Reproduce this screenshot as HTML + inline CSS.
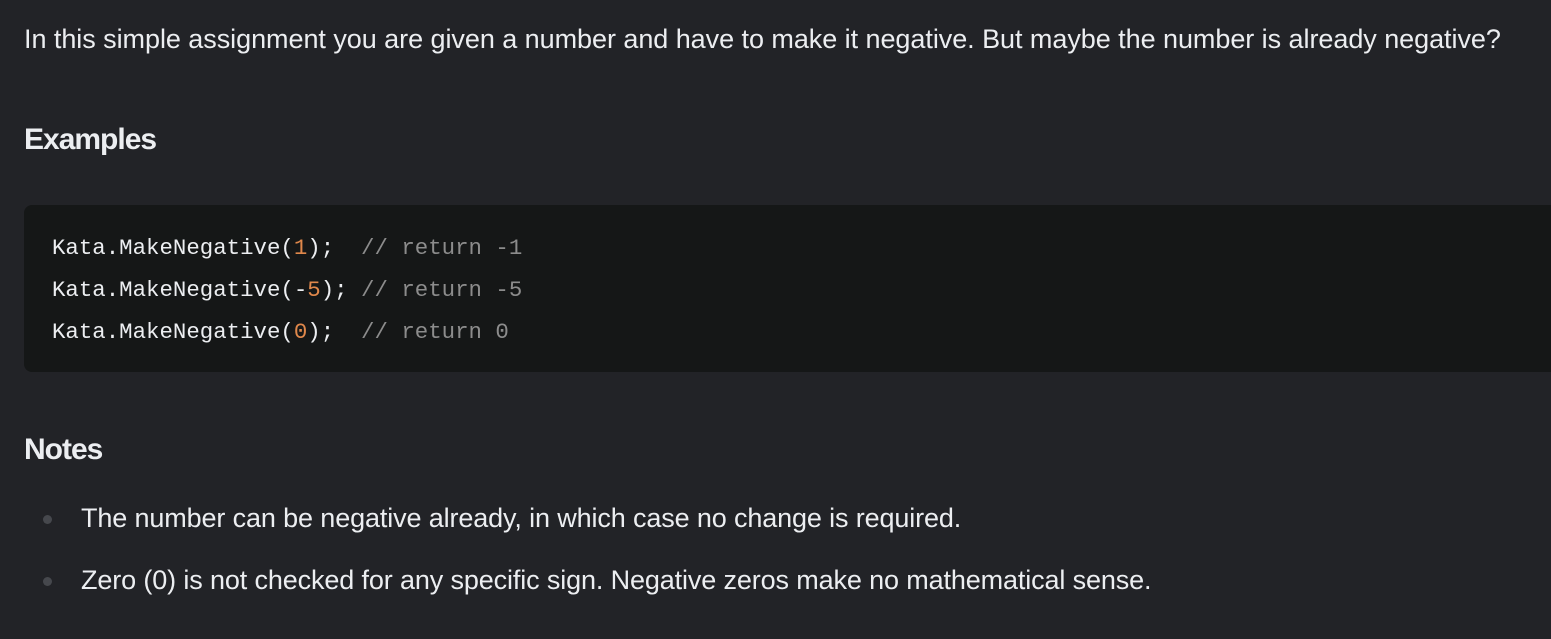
<!DOCTYPE html>
<html><head><meta charset="utf-8"><style>
html,body{margin:0;padding:0;background:#222327;width:1551px;height:639px;overflow:hidden;}
body{font-family:"Liberation Sans",sans-serif;color:#eceef1;position:relative;}
.t{position:absolute;white-space:nowrap;}
p.t{margin:0;font-size:27px;letter-spacing:-0.05px;}
p.s{letter-spacing:-0.13px;}
h.t{font-weight:bold;font-size:30px;letter-spacing:-1px;}
.code{position:absolute;left:24px;top:205px;width:1560px;height:167px;background:#151717;border-radius:8px;}
.cl{position:absolute;left:52px;font-family:"Liberation Mono",monospace;font-size:22.4px;color:#eceef1;white-space:pre;}
.n{color:#e0884b}.c{color:#8c8c8c}
.b{position:absolute;left:43px;width:9px;height:9px;border-radius:50%;background:#46484d;}
</style></head><body>
<p class="t" style="left:24px;top:24px;">In this simple assignment you are given a number and have to make it negative. But maybe the number is already negative?</p>
<h class="t" style="left:24px;top:123px;">Examples</h>
<div class="code"></div>
<div class="cl" style="top:235px">Kata.MakeNegative(<span class="n">1</span>);  <span class="c">// return -1</span></div>
<div class="cl" style="top:277px">Kata.MakeNegative(-<span class="n">5</span>); <span class="c">// return -5</span></div>
<div class="cl" style="top:319px">Kata.MakeNegative(<span class="n">0</span>);  <span class="c">// return 0</span></div>
<h class="t" style="left:24px;top:433px;">Notes</h>
<div class="b" style="top:515px"></div>
<p class="t s" style="left:81px;top:503px;">The number can be negative already, in which case no change is required.</p>
<div class="b" style="top:577px"></div>
<p class="t s" style="left:81px;top:565px;">Zero (0) is not checked for any specific sign. Negative zeros make no mathematical sense.</p>
</body></html>
